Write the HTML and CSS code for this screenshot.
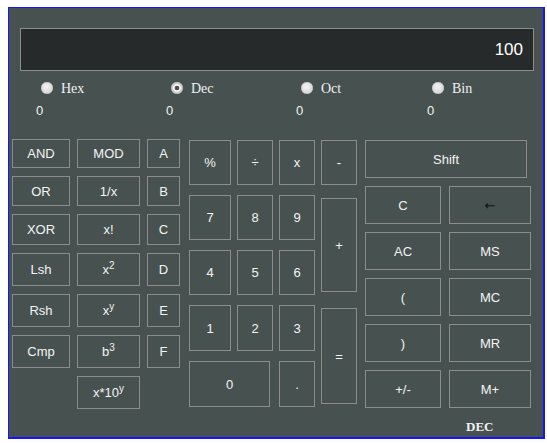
FILE: index.html
```html
<!DOCTYPE html>
<html>
<head>
<meta charset="utf-8">
<link rel="stylesheet" href="styles.css">
</head>
<body>
<div class="calc">
  <div class="display">100</div>
  <div class="modes">
    <div class="mode"><div class="opt"><span class="radio"></span><span class="lbl">Hex</span></div><div class="val">0</div></div>
    <div class="mode"><div class="opt"><span class="radio checked"></span><span class="lbl">Dec</span></div><div class="val">0</div></div>
    <div class="mode"><div class="opt"><span class="radio"></span><span class="lbl">Oct</span></div><div class="val">0</div></div>
    <div class="mode"><div class="opt"><span class="radio"></span><span class="lbl">Bin</span></div><div class="val">0</div></div>
  </div>
  <div class="pad">
    <div class="left">
      <button class="btn">AND</button><button class="btn">MOD</button><button class="btn">A</button>
      <button class="btn">OR</button><button class="btn">1/x</button><button class="btn">B</button>
      <button class="btn">XOR</button><button class="btn">x!</button><button class="btn">C</button>
      <button class="btn">Lsh</button><button class="btn">x<sup>2</sup></button><button class="btn">D</button>
      <button class="btn">Rsh</button><button class="btn">x<sup>y</sup></button><button class="btn">E</button>
      <button class="btn">Cmp</button><button class="btn">b<sup>3</sup></button><button class="btn">F</button>
      <button class="btn col2">x*10<sup>y</sup></button>
    </div>
    <div class="mid">
      <button class="btn">%</button><button class="btn">÷</button><button class="btn">x</button><button class="btn">-</button>
      <button class="btn">7</button><button class="btn">8</button><button class="btn">9</button><button class="btn plus">+</button>
      <button class="btn">4</button><button class="btn">5</button><button class="btn">6</button>
      <button class="btn">1</button><button class="btn">2</button><button class="btn">3</button><button class="btn eq">=</button>
      <button class="btn zero">0</button><button class="btn dot">.</button>
    </div>
    <div class="right">
      <div class="rgrid">
        <button class="btn shift">Shift</button>
        <button class="btn">C</button><button class="btn back">←</button>
        <button class="btn">AC</button><button class="btn">MS</button>
        <button class="btn">(</button><button class="btn">MC</button>
        <button class="btn">)</button><button class="btn">MR</button>
        <button class="btn">+/-</button><button class="btn">M+</button>
      </div>
      <div class="base">DEC</div>
    </div>
  </div>
</div>
</body>
</html>
```
FILE: styles.css
```css
html, body {
  background: #ffffff;
}
body {
  margin: 7px 0 0 8px;
  font-family: "Liberation Sans", Arial, sans-serif;
}
.calc {
  width: 534px;
  height: 429px;
  border-style: solid;
  border-color: #1414ff;
  border-width: 1px 2px 2px 1px;
  background: #475150;
  box-sizing: content-box;
}
.display {
  margin: 20px 0 0 11px;
  width: 502px;
  height: 41px;
  border: 1px solid #8d8d8d;
  background: #262a2b;
  color: #ffffff;
  font-size: 17px;
  display: flex;
  align-items: center;
  justify-content: flex-end;
  padding-right: 10px;
  box-sizing: content-box;
}
.modes {
  display: grid;
  grid-template-columns: 130px 130px 131px 130px;
  margin: 9px 0 0 27px;
}
.mode {
  display: flex;
  flex-direction: column;
  gap: 7px;
}
.opt {
  display: flex;
  align-items: center;
  height: 16px;
  padding-left: 5px;
}
.radio {
  width: 12px;
  height: 12px;
  border-radius: 50%;
  background: radial-gradient(circle at 45% 40%, #f4f4f4 0, #dcdcdc 55%, #c4c4c4 100%);
  box-shadow: inset 0 0 0 0.5px #b5b5b5;
  margin-right: 8px;
}
.radio.checked {
  background: radial-gradient(circle, #4d4d4d 0, #4d4d4d 2px, #f2f2f2 2.6px, #f2f2f2 3.6px, #cfcfcf 4.2px, #bdbdbd 100%);
}
.lbl {
  font-family: "Liberation Serif", "Times New Roman", serif;
  font-size: 14px;
  color: #f2f2f2;
  position: relative;
  top: 1px;
}
.val {
  font-size: 13px;
  line-height: 15px;
  color: #f2f2f2;
}
.pad {
  display: flex;
  margin: 21px 0 0 3px;
  align-items: flex-start;
}
.btn {
  background: transparent;
  border: 1px solid #8c8c8c;
  color: #f4f4f4;
  font-family: "Liberation Sans", Arial, sans-serif;
  font-size: 13px;
  padding: 0;
  margin: 0;
  line-height: 15px;
}
.btn sup {
  font-size: 10px;
  line-height: 0;
  vertical-align: 5px;
}
.left {
  display: grid;
  grid-template-columns: 58px 63px 33px;
  grid-template-rows: 29px 30px 31px 33px 33px 33px 33px;
  column-gap: 7px;
  row-gap: 8px;
}
.left .col2 {
  grid-column: 2;
}
.mid {
  margin: 1px 0 0 9px;
  display: grid;
  grid-template-columns: 42px 36px 36px 36px;
  grid-template-rows: 45px 45px 45px 46px 46px;
  column-gap: 6px;
  row-gap: 10px;
}
.mid .plus {
  grid-column: 4;
  grid-row: 2 / span 2;
  align-self: center;
  height: 94px;
}
.mid .eq {
  grid-column: 4;
  grid-row: 4 / span 2;
  align-self: center;
  height: 96px;
}
.mid .zero {
  grid-column: 1 / span 2;
  width: 81px;
}
.mid .dot {
  grid-column: 3;
}
.right {
  margin: 1px 0 0 8px;
  display: flex;
  flex-direction: column;
}
.rgrid {
  display: grid;
  grid-template-columns: 76px 82px;
  grid-auto-rows: 38px;
  column-gap: 8px;
  row-gap: 8px;
}
.rgrid .shift {
  grid-column: 1 / span 2;
  width: 162px;
}
.rgrid .back {
  color: #111111;
  font-family: "DejaVu Sans", sans-serif;
  font-size: 13px;
}
.base {
  margin-top: 11px;
  padding-left: 101px;
  font-family: "Liberation Serif", "Times New Roman", serif;
  font-weight: bold;
  font-size: 13px;
  line-height: 15px;
  color: #f2f2f2;
}
```
